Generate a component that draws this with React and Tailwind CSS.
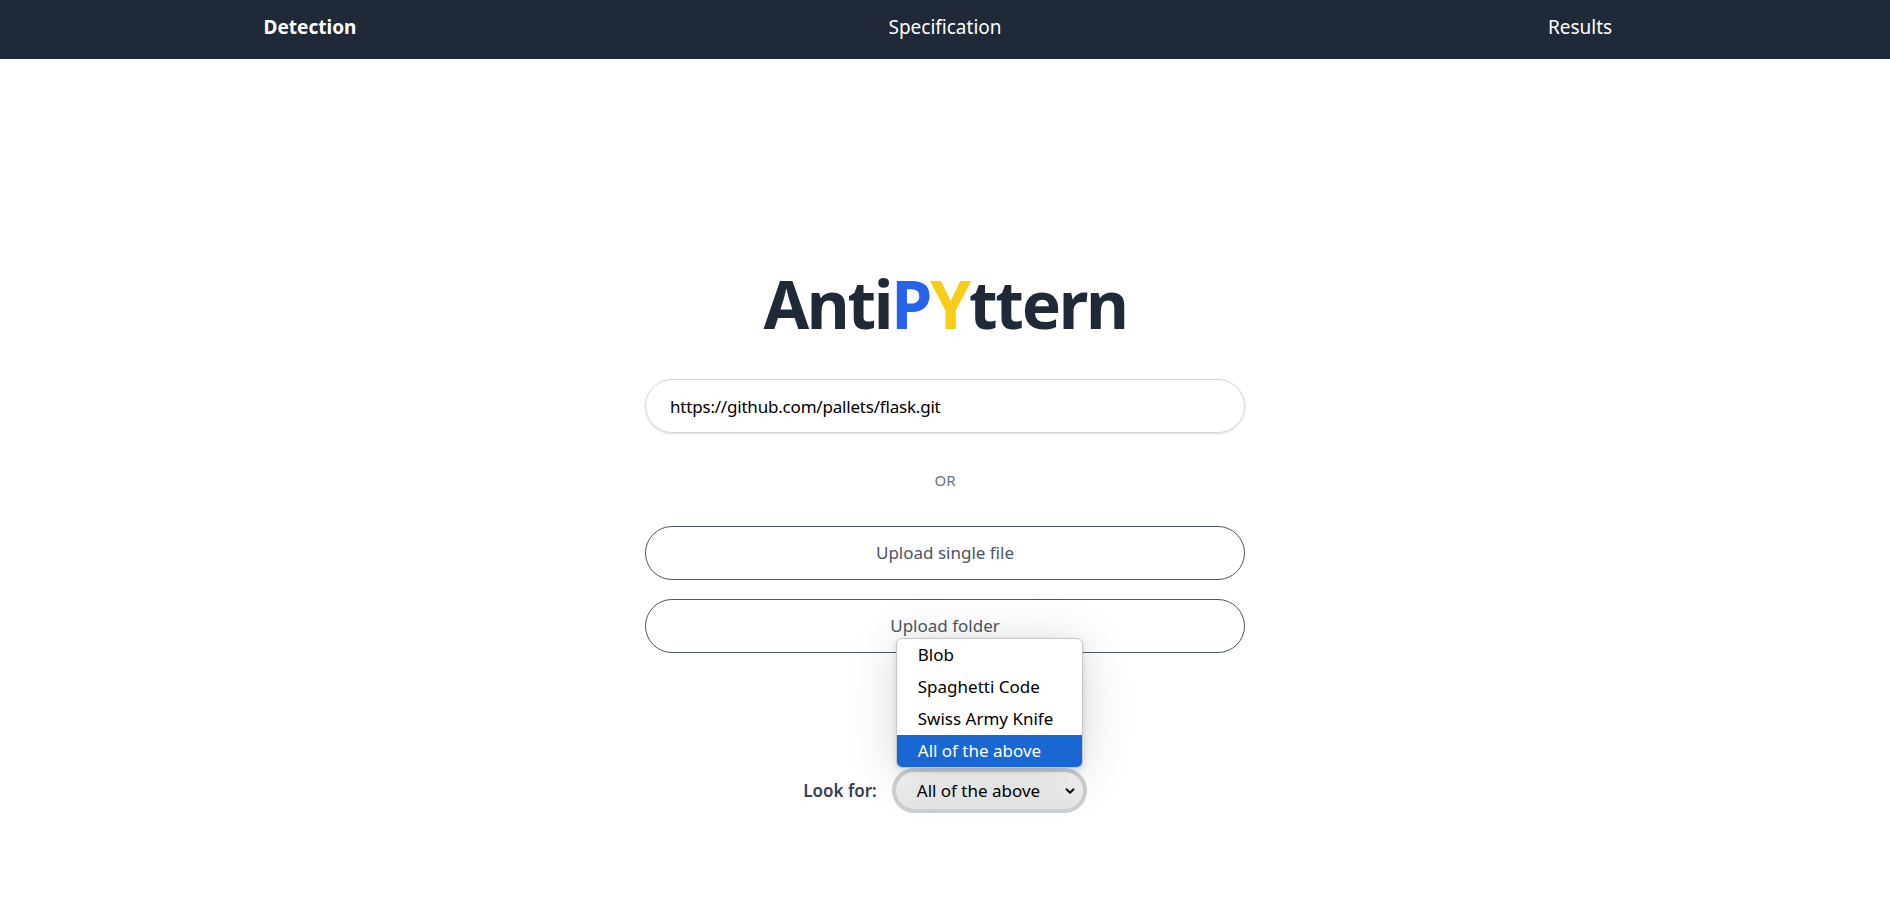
import { useState } from "react";

const patterns = ["Blob", "Spaghetti Code", "Swiss Army Knife", "All of the above"];

function NavBar() {
  const items = [
    { label: "Detection", active: true },
    { label: "Specification", active: false },
    { label: "Results", active: false },
  ];

  return (
    <nav className="flex h-[59px] items-center justify-center overflow-hidden bg-[#1f2937] pb-[5px] text-white">
      {items.map((item) => (
        <a
          key={item.label}
          href="#"
          className={`w-[635px] shrink-0 text-center text-[19px] leading-none ${
            item.active ? "font-bold" : "font-normal"
          }`}
        >
          {item.label}
        </a>
      ))}
    </nav>
  );
}

function PatternSelect() {
  const [value] = useState("All of the above");

  return (
    <div className="relative">
      <div className="absolute bottom-full left-[4px] z-10 w-[187px] overflow-hidden rounded-[6px] border border-[#c6c6c6] bg-white shadow-[0_6px_50px_rgba(0,0,0,0.16),0_2px_6px_rgba(0,0,0,0.12)]">
        {patterns.map((pattern) => (
          <div
            key={pattern}
            className={`flex h-[32px] items-center pl-[21px] text-[17px] ${
              pattern === value ? "bg-[#1967d2] text-white" : "text-black"
            }`}
          >
            {pattern}
          </div>
        ))}
      </div>

      <div className="flex h-[45px] w-[195px] items-center justify-between rounded-full border-4 border-[#cbd0d7] bg-gradient-to-b from-[#f8f8f8] to-[#e4e4e4] pl-[21px] pr-[8px] text-[17px] text-black">
        <span>{value}</span>
        <svg width="10" height="10" viewBox="0 0 10 10" className="mt-[1px]">
          <polyline
            points="1.5,3.2 5,6.7 8.5,3.2"
            fill="none"
            stroke="#111"
            strokeWidth="2"
            strokeLinecap="round"
            strokeLinejoin="round"
          />
        </svg>
      </div>
    </div>
  );
}

export default function App() {
  return (
    <div className="min-h-screen bg-white font-['Noto_Sans','Open_Sans',sans-serif]">
      <NavBar />

      <main className="flex flex-col items-center pt-[211px]">
        <h1 className="text-[66px] font-bold leading-none tracking-[-2.3px] text-[#1f2937]">
          Anti<span className="text-[#2563eb]">P</span>
          <span className="text-[#facc15]">Y</span>ttern
        </h1>

        <input
          type="text"
          defaultValue="https://github.com/pallets/flask.git"
          className="mt-[43px] h-[54px] w-[600px] rounded-full border border-[#d1d5db] px-6 text-[17px] tracking-[-0.2px] text-black shadow-sm outline-none"
        />

        <p className="mt-[37px] text-[15px] leading-5 text-[#6b7280]">OR</p>

        <div className="mt-[36px] flex w-[600px] flex-col gap-[19px]">
          <button className="h-[54px] rounded-full border border-[#4b5563] text-[17px] text-[#4b5563]">
            Upload single file
          </button>
          <button className="h-[54px] rounded-full border border-[#4b5563] text-[17px] text-[#4b5563]">
            Upload folder
          </button>
        </div>

        <div className="mt-[115px] flex items-center gap-[15px]">
          <span className="text-[17px] font-semibold text-[#374151]">Look for:</span>
          <PatternSelect />
        </div>
      </main>
    </div>
  );
}
